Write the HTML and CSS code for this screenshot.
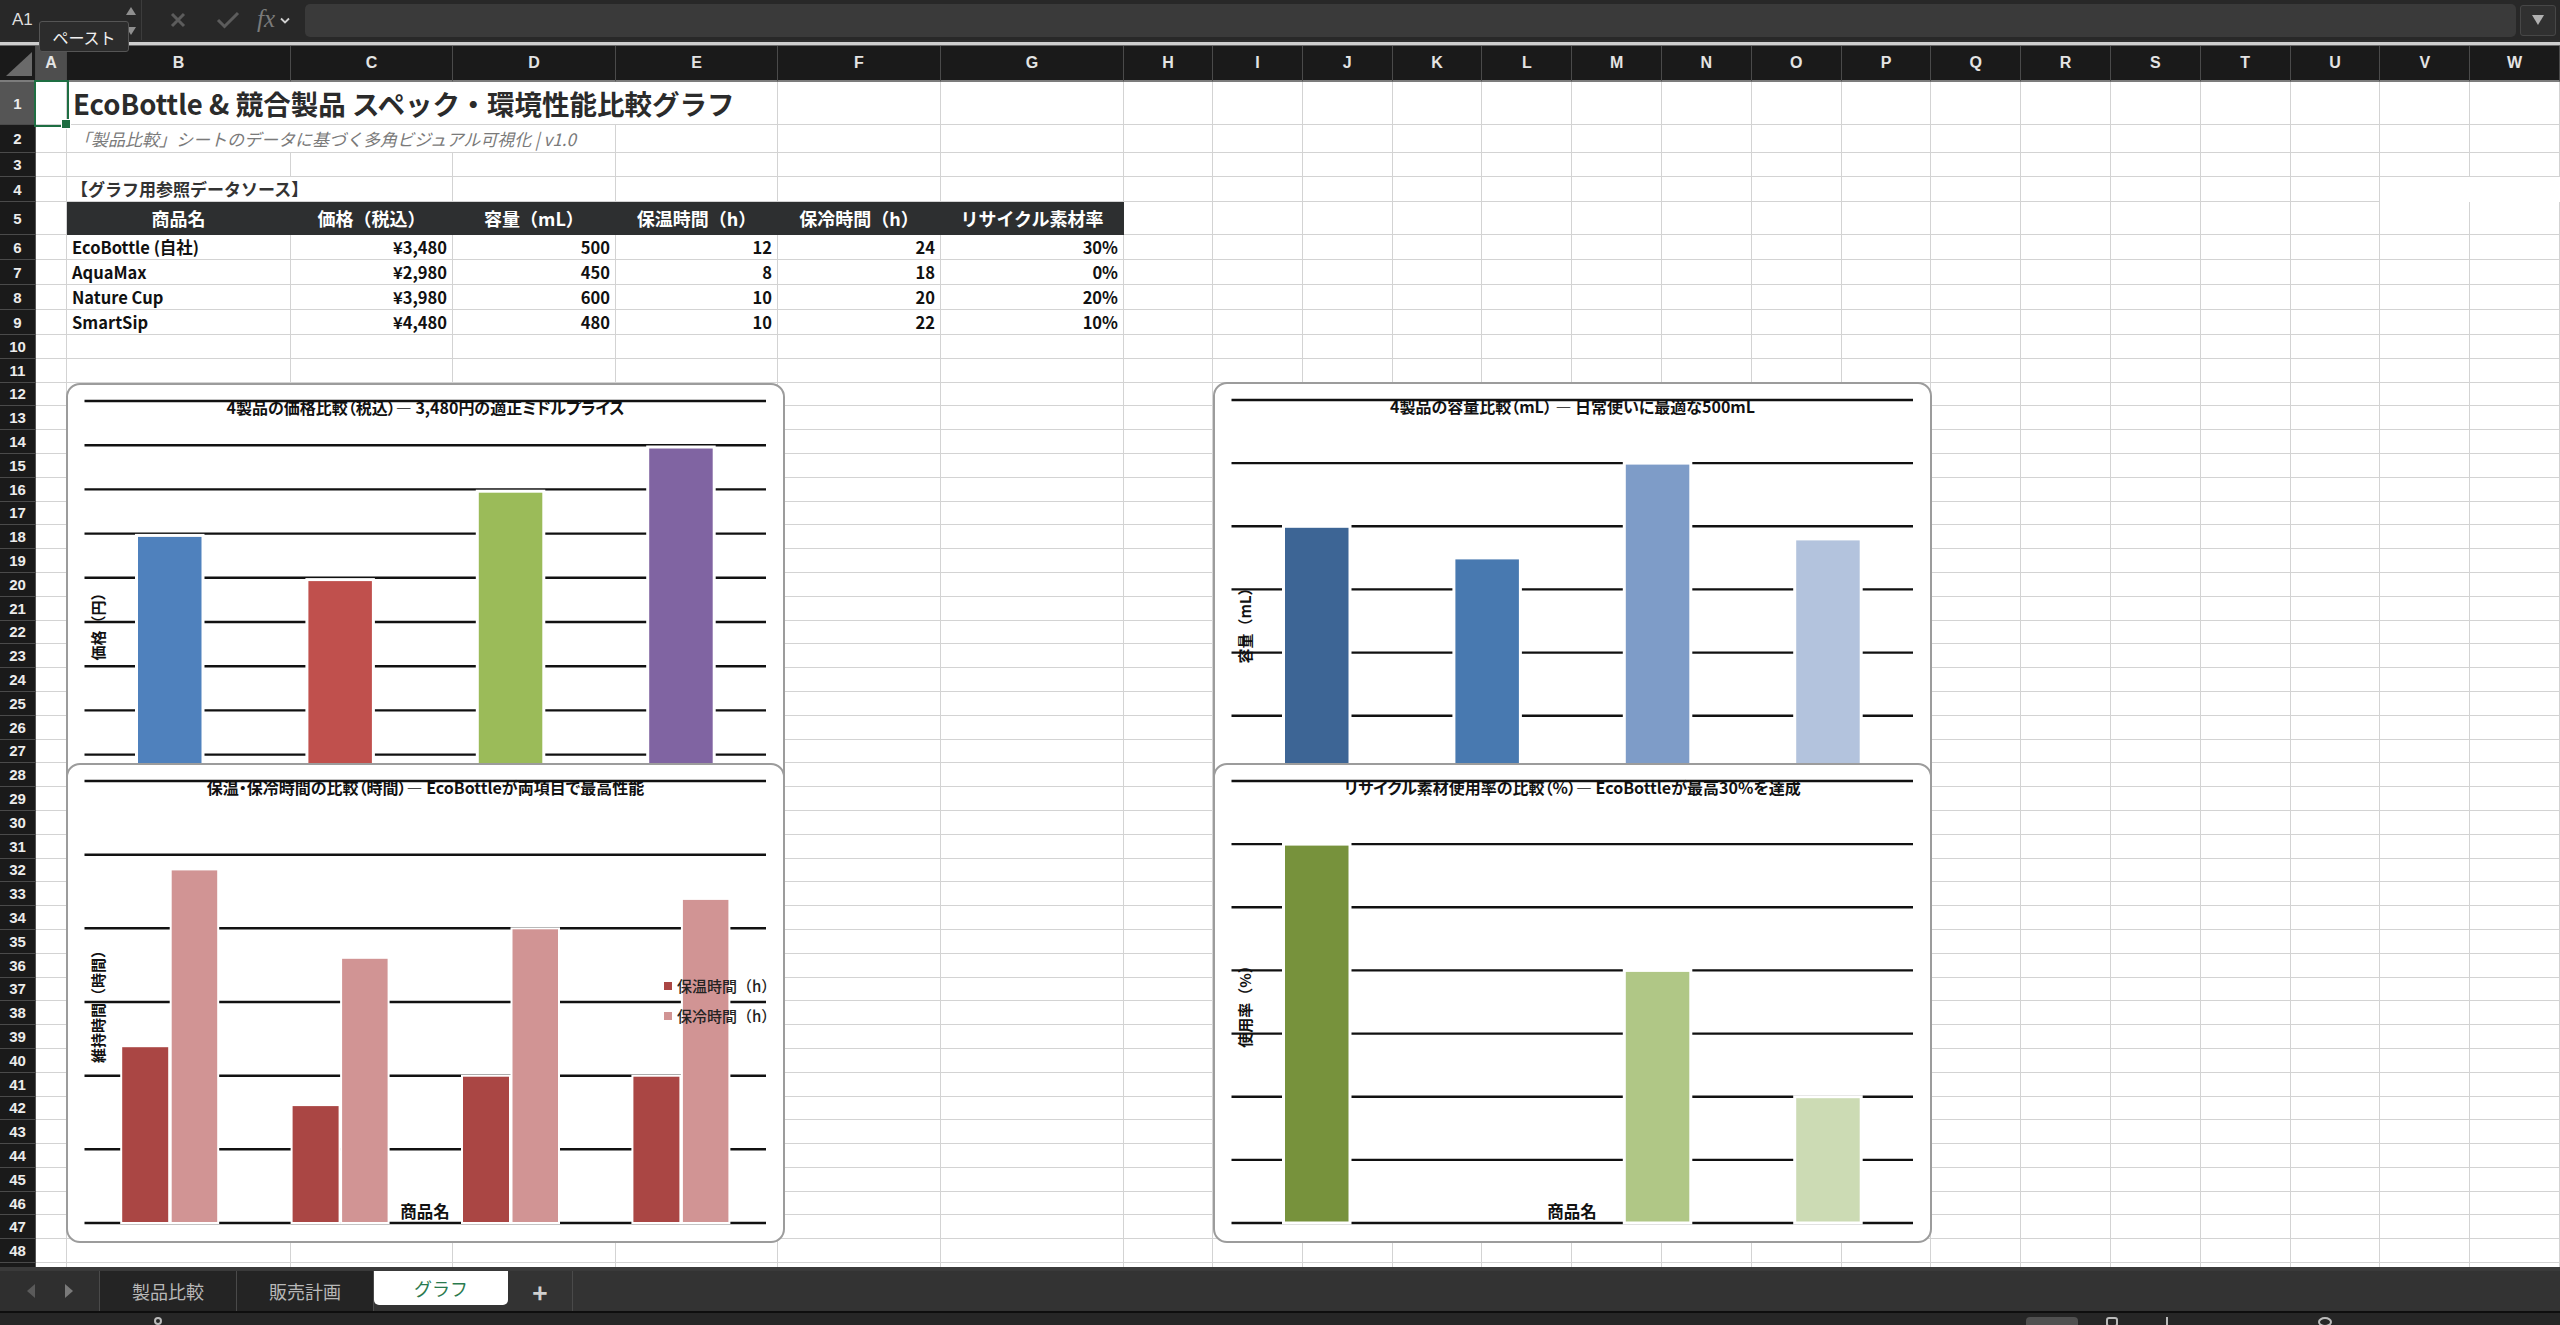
FILE: index.html
```html
<!DOCTYPE html>
<html lang="ja">
<head>
<meta charset="utf-8">
<title>グラフ</title>
<link rel="stylesheet" href="styles.css">
</head>
<body>
<div class="app">
  <div class="fbar">
    <div class="namebox">
      <span class="nb-text">A1</span>
      <span class="nb-spin">
        <svg width="12" height="30" viewBox="0 0 12 30"><path class="spin" d="M1 10 L6 2 L11 10 Z M1 22 L6 30 L11 22 Z"/></svg>
      </span>
    </div>
    <div class="ficons">
      <svg class="ic-x" width="16" height="16" viewBox="0 0 16 16"><path d="M2 2 L14 14 M14 2 L2 14"/></svg>
      <svg class="ic-ok" width="24" height="18" viewBox="0 0 24 18"><path d="M2 9 L8.5 15.5 L22 2"/></svg>
      <span class="fx">fx</span>
      <svg class="ic-chev" width="10" height="7" viewBox="0 0 10 7"><path d="M1 1.5 L5 5.5 L9 1.5"/></svg>
    </div>
    <div class="finput"></div>
    <div class="fdrop"><svg width="14" height="12" viewBox="0 0 14 12"><path d="M1 1 L13 1 L7 11 Z"/></svg></div>
  </div>
  <div class="fsep"></div>

  <div class="sheet">
    <table class="grid">
      <colgroup>
        <col class="w-rh"><col class="w-a"><col class="w-b"><col class="w-c"><col class="w-d"><col class="w-e"><col class="w-f"><col class="w-g"><col class="w-h">
        <col class="w-n"><col class="w-n"><col class="w-n"><col class="w-n"><col class="w-n"><col class="w-n"><col class="w-n"><col class="w-n"><col class="w-n"><col class="w-n"><col class="w-n"><col class="w-n"><col class="w-n"><col class="w-n"><col class="w-n">
      </colgroup>
      <thead>
        <tr class="hdr">
          <th class="corner"><span class="tri"></span></th><th class="hsel">A</th><th>B</th><th>C</th><th>D</th><th>E</th><th>F</th><th>G</th><th>H</th><th>I</th><th>J</th><th>K</th><th>L</th><th>M</th><th>N</th><th>O</th><th>P</th><th>Q</th><th>R</th><th>S</th><th>T</th><th>U</th><th>V</th><th>W</th>
        </tr>
      </thead>
      <tbody>
        <tr class="r-1"><th class="hsel">1</th><td class="sel"></td><td colspan="4" class="title">EcoBottle &amp; 競合製品 スペック・環境性能比較グラフ</td><td></td><td></td><td></td><td></td><td></td><td></td><td></td><td></td><td></td><td></td><td></td><td></td><td></td><td></td><td></td><td></td><td></td><td></td></tr>
        <tr class="r-2"><th>2</th><td></td><td colspan="3" class="sub">「製品比較」シートのデータに基づく多角ビジュアル可視化 | v1.0</td><td></td><td></td><td></td><td></td><td></td><td></td><td></td><td></td><td></td><td></td><td></td><td></td><td></td><td></td><td></td><td></td><td></td><td></td><td></td></tr>
        <tr class="r-3"><th>3</th><td></td><td></td><td></td><td></td><td></td><td></td><td></td><td></td><td></td><td></td><td></td><td></td><td></td><td></td><td></td><td></td><td></td><td></td><td></td><td></td><td></td><td></td><td></td></tr>
        <tr class="r-4"><th>4</th><td></td><td colspan="2" class="sect">【グラフ用参照データソース】</td><td></td><td></td><td></td><td></td><td></td><td></td><td></td><td></td><td></td><td></td><td></td><td></td><td></td><td></td><td></td><td></td><td></td><td></td></tr>
        <tr class="r-5"><th>5</th><td></td><td class="th">商品名</td><td class="th">価格（税込）</td><td class="th">容量（mL）</td><td class="th">保温時間（h）</td><td class="th">保冷時間（h）</td><td class="th">リサイクル素材率</td><td></td><td></td><td></td><td></td><td></td><td></td><td></td><td></td><td></td><td></td><td></td><td></td><td></td><td></td><td></td><td></td></tr>
        <tr class="r-d"><th>6</th><td></td><td class="name">EcoBottle (自社)</td><td class="num">¥3,480</td><td class="num">500</td><td class="num">12</td><td class="num">24</td><td class="num">30%</td><td></td><td></td><td></td><td></td><td></td><td></td><td></td><td></td><td></td><td></td><td></td><td></td><td></td><td></td><td></td><td></td></tr>
        <tr class="r-d"><th>7</th><td></td><td class="name">AquaMax</td><td class="num">¥2,980</td><td class="num">450</td><td class="num">8</td><td class="num">18</td><td class="num">0%</td><td></td><td></td><td></td><td></td><td></td><td></td><td></td><td></td><td></td><td></td><td></td><td></td><td></td><td></td><td></td><td></td></tr>
        <tr class="r-d"><th>8</th><td></td><td class="name">Nature Cup</td><td class="num">¥3,980</td><td class="num">600</td><td class="num">10</td><td class="num">20</td><td class="num">20%</td><td></td><td></td><td></td><td></td><td></td><td></td><td></td><td></td><td></td><td></td><td></td><td></td><td></td><td></td><td></td><td></td></tr>
        <tr class="r-d"><th>9</th><td></td><td class="name">SmartSip</td><td class="num">¥4,480</td><td class="num">480</td><td class="num">10</td><td class="num">22</td><td class="num">10%</td><td></td><td></td><td></td><td></td><td></td><td></td><td></td><td></td><td></td><td></td><td></td><td></td><td></td><td></td><td></td><td></td></tr>
        <tr class="r-n"><th>10</th><td></td><td></td><td></td><td></td><td></td><td></td><td></td><td></td><td></td><td></td><td></td><td></td><td></td><td></td><td></td><td></td><td></td><td></td><td></td><td></td><td></td><td></td><td></td></tr>
        <tr class="r-n"><th>11</th><td></td><td></td><td></td><td></td><td></td><td></td><td></td><td></td><td></td><td></td><td></td><td></td><td></td><td></td><td></td><td></td><td></td><td></td><td></td><td></td><td></td><td></td><td></td></tr>
        <tr class="r-n"><th>12</th><td></td><td></td><td></td><td></td><td></td><td></td><td></td><td></td><td></td><td></td><td></td><td></td><td></td><td></td><td></td><td></td><td></td><td></td><td></td><td></td><td></td><td></td><td></td></tr>
        <tr class="r-n"><th>13</th><td></td><td></td><td></td><td></td><td></td><td></td><td></td><td></td><td></td><td></td><td></td><td></td><td></td><td></td><td></td><td></td><td></td><td></td><td></td><td></td><td></td><td></td><td></td></tr>
        <tr class="r-n"><th>14</th><td></td><td></td><td></td><td></td><td></td><td></td><td></td><td></td><td></td><td></td><td></td><td></td><td></td><td></td><td></td><td></td><td></td><td></td><td></td><td></td><td></td><td></td><td></td></tr>
        <tr class="r-n"><th>15</th><td></td><td></td><td></td><td></td><td></td><td></td><td></td><td></td><td></td><td></td><td></td><td></td><td></td><td></td><td></td><td></td><td></td><td></td><td></td><td></td><td></td><td></td><td></td></tr>
        <tr class="r-n"><th>16</th><td></td><td></td><td></td><td></td><td></td><td></td><td></td><td></td><td></td><td></td><td></td><td></td><td></td><td></td><td></td><td></td><td></td><td></td><td></td><td></td><td></td><td></td><td></td></tr>
        <tr class="r-n"><th>17</th><td></td><td></td><td></td><td></td><td></td><td></td><td></td><td></td><td></td><td></td><td></td><td></td><td></td><td></td><td></td><td></td><td></td><td></td><td></td><td></td><td></td><td></td><td></td></tr>
        <tr class="r-n"><th>18</th><td></td><td></td><td></td><td></td><td></td><td></td><td></td><td></td><td></td><td></td><td></td><td></td><td></td><td></td><td></td><td></td><td></td><td></td><td></td><td></td><td></td><td></td><td></td></tr>
        <tr class="r-n"><th>19</th><td></td><td></td><td></td><td></td><td></td><td></td><td></td><td></td><td></td><td></td><td></td><td></td><td></td><td></td><td></td><td></td><td></td><td></td><td></td><td></td><td></td><td></td><td></td></tr>
        <tr class="r-n"><th>20</th><td></td><td></td><td></td><td></td><td></td><td></td><td></td><td></td><td></td><td></td><td></td><td></td><td></td><td></td><td></td><td></td><td></td><td></td><td></td><td></td><td></td><td></td><td></td></tr>
        <tr class="r-n"><th>21</th><td></td><td></td><td></td><td></td><td></td><td></td><td></td><td></td><td></td><td></td><td></td><td></td><td></td><td></td><td></td><td></td><td></td><td></td><td></td><td></td><td></td><td></td><td></td></tr>
        <tr class="r-n"><th>22</th><td></td><td></td><td></td><td></td><td></td><td></td><td></td><td></td><td></td><td></td><td></td><td></td><td></td><td></td><td></td><td></td><td></td><td></td><td></td><td></td><td></td><td></td><td></td></tr>
        <tr class="r-n"><th>23</th><td></td><td></td><td></td><td></td><td></td><td></td><td></td><td></td><td></td><td></td><td></td><td></td><td></td><td></td><td></td><td></td><td></td><td></td><td></td><td></td><td></td><td></td><td></td></tr>
        <tr class="r-n"><th>24</th><td></td><td></td><td></td><td></td><td></td><td></td><td></td><td></td><td></td><td></td><td></td><td></td><td></td><td></td><td></td><td></td><td></td><td></td><td></td><td></td><td></td><td></td><td></td></tr>
        <tr class="r-n"><th>25</th><td></td><td></td><td></td><td></td><td></td><td></td><td></td><td></td><td></td><td></td><td></td><td></td><td></td><td></td><td></td><td></td><td></td><td></td><td></td><td></td><td></td><td></td><td></td></tr>
        <tr class="r-n"><th>26</th><td></td><td></td><td></td><td></td><td></td><td></td><td></td><td></td><td></td><td></td><td></td><td></td><td></td><td></td><td></td><td></td><td></td><td></td><td></td><td></td><td></td><td></td><td></td></tr>
        <tr class="r-n"><th>27</th><td></td><td></td><td></td><td></td><td></td><td></td><td></td><td></td><td></td><td></td><td></td><td></td><td></td><td></td><td></td><td></td><td></td><td></td><td></td><td></td><td></td><td></td><td></td></tr>
        <tr class="r-n"><th>28</th><td></td><td></td><td></td><td></td><td></td><td></td><td></td><td></td><td></td><td></td><td></td><td></td><td></td><td></td><td></td><td></td><td></td><td></td><td></td><td></td><td></td><td></td><td></td></tr>
        <tr class="r-n"><th>29</th><td></td><td></td><td></td><td></td><td></td><td></td><td></td><td></td><td></td><td></td><td></td><td></td><td></td><td></td><td></td><td></td><td></td><td></td><td></td><td></td><td></td><td></td><td></td></tr>
        <tr class="r-n"><th>30</th><td></td><td></td><td></td><td></td><td></td><td></td><td></td><td></td><td></td><td></td><td></td><td></td><td></td><td></td><td></td><td></td><td></td><td></td><td></td><td></td><td></td><td></td><td></td></tr>
        <tr class="r-n"><th>31</th><td></td><td></td><td></td><td></td><td></td><td></td><td></td><td></td><td></td><td></td><td></td><td></td><td></td><td></td><td></td><td></td><td></td><td></td><td></td><td></td><td></td><td></td><td></td></tr>
        <tr class="r-n"><th>32</th><td></td><td></td><td></td><td></td><td></td><td></td><td></td><td></td><td></td><td></td><td></td><td></td><td></td><td></td><td></td><td></td><td></td><td></td><td></td><td></td><td></td><td></td><td></td></tr>
        <tr class="r-n"><th>33</th><td></td><td></td><td></td><td></td><td></td><td></td><td></td><td></td><td></td><td></td><td></td><td></td><td></td><td></td><td></td><td></td><td></td><td></td><td></td><td></td><td></td><td></td><td></td></tr>
        <tr class="r-n"><th>34</th><td></td><td></td><td></td><td></td><td></td><td></td><td></td><td></td><td></td><td></td><td></td><td></td><td></td><td></td><td></td><td></td><td></td><td></td><td></td><td></td><td></td><td></td><td></td></tr>
        <tr class="r-n"><th>35</th><td></td><td></td><td></td><td></td><td></td><td></td><td></td><td></td><td></td><td></td><td></td><td></td><td></td><td></td><td></td><td></td><td></td><td></td><td></td><td></td><td></td><td></td><td></td></tr>
        <tr class="r-n"><th>36</th><td></td><td></td><td></td><td></td><td></td><td></td><td></td><td></td><td></td><td></td><td></td><td></td><td></td><td></td><td></td><td></td><td></td><td></td><td></td><td></td><td></td><td></td><td></td></tr>
        <tr class="r-n"><th>37</th><td></td><td></td><td></td><td></td><td></td><td></td><td></td><td></td><td></td><td></td><td></td><td></td><td></td><td></td><td></td><td></td><td></td><td></td><td></td><td></td><td></td><td></td><td></td></tr>
        <tr class="r-n"><th>38</th><td></td><td></td><td></td><td></td><td></td><td></td><td></td><td></td><td></td><td></td><td></td><td></td><td></td><td></td><td></td><td></td><td></td><td></td><td></td><td></td><td></td><td></td><td></td></tr>
        <tr class="r-n"><th>39</th><td></td><td></td><td></td><td></td><td></td><td></td><td></td><td></td><td></td><td></td><td></td><td></td><td></td><td></td><td></td><td></td><td></td><td></td><td></td><td></td><td></td><td></td><td></td></tr>
        <tr class="r-n"><th>40</th><td></td><td></td><td></td><td></td><td></td><td></td><td></td><td></td><td></td><td></td><td></td><td></td><td></td><td></td><td></td><td></td><td></td><td></td><td></td><td></td><td></td><td></td><td></td></tr>
        <tr class="r-n"><th>41</th><td></td><td></td><td></td><td></td><td></td><td></td><td></td><td></td><td></td><td></td><td></td><td></td><td></td><td></td><td></td><td></td><td></td><td></td><td></td><td></td><td></td><td></td><td></td></tr>
        <tr class="r-n"><th>42</th><td></td><td></td><td></td><td></td><td></td><td></td><td></td><td></td><td></td><td></td><td></td><td></td><td></td><td></td><td></td><td></td><td></td><td></td><td></td><td></td><td></td><td></td><td></td></tr>
        <tr class="r-n"><th>43</th><td></td><td></td><td></td><td></td><td></td><td></td><td></td><td></td><td></td><td></td><td></td><td></td><td></td><td></td><td></td><td></td><td></td><td></td><td></td><td></td><td></td><td></td><td></td></tr>
        <tr class="r-n"><th>44</th><td></td><td></td><td></td><td></td><td></td><td></td><td></td><td></td><td></td><td></td><td></td><td></td><td></td><td></td><td></td><td></td><td></td><td></td><td></td><td></td><td></td><td></td><td></td></tr>
        <tr class="r-n"><th>45</th><td></td><td></td><td></td><td></td><td></td><td></td><td></td><td></td><td></td><td></td><td></td><td></td><td></td><td></td><td></td><td></td><td></td><td></td><td></td><td></td><td></td><td></td><td></td></tr>
        <tr class="r-n"><th>46</th><td></td><td></td><td></td><td></td><td></td><td></td><td></td><td></td><td></td><td></td><td></td><td></td><td></td><td></td><td></td><td></td><td></td><td></td><td></td><td></td><td></td><td></td><td></td></tr>
        <tr class="r-n"><th>47</th><td></td><td></td><td></td><td></td><td></td><td></td><td></td><td></td><td></td><td></td><td></td><td></td><td></td><td></td><td></td><td></td><td></td><td></td><td></td><td></td><td></td><td></td><td></td></tr>
        <tr class="r-n"><th>48</th><td></td><td></td><td></td><td></td><td></td><td></td><td></td><td></td><td></td><td></td><td></td><td></td><td></td><td></td><td></td><td></td><td></td><td></td><td></td><td></td><td></td><td></td><td></td></tr>
        <tr class="r-n"><th></th><td></td><td></td><td></td><td></td><td></td><td></td><td></td><td></td><td></td><td></td><td></td><td></td><td></td><td></td><td></td><td></td><td></td><td></td><td></td><td></td><td></td><td></td><td></td></tr>
      </tbody>
    </table>

    <!-- Chart 1: price -->
    <div class="chart ch-tl">
      <svg class="plot" width="715" height="476" viewBox="0 0 715 476">
        <g class="gl">
          <line x1="16.5" x2="698" y1="16" y2="16"/><line x1="16.5" x2="698" y1="60.2" y2="60.2"/><line x1="16.5" x2="698" y1="104.4" y2="104.4"/><line x1="16.5" x2="698" y1="148.6" y2="148.6"/><line x1="16.5" x2="698" y1="192.8" y2="192.8"/><line x1="16.5" x2="698" y1="237" y2="237"/><line x1="16.5" x2="698" y1="281.2" y2="281.2"/><line x1="16.5" x2="698" y1="325.4" y2="325.4"/><line x1="16.5" x2="698" y1="369.6" y2="369.6"/><line x1="16.5" x2="698" y1="413.8" y2="413.8"/><line x1="16.5" x2="698" y1="458" y2="458"/>
        </g>
        <g class="bars">
          <rect x="68.5" y="150.4" width="66.5" height="310" fill="#4f81bd"/>
          <rect x="238.9" y="194.6" width="66.5" height="270" fill="#c0504d"/>
          <rect x="409.3" y="106.2" width="66.5" height="360" fill="#9bbb59"/>
          <rect x="579.7" y="62" width="66.5" height="400" fill="#8064a2"/>
        </g>
      </svg>
      <div class="ctitle">4製品の価格比較（税込）— 3,480円の適正ミドルプライス</div>
      <div class="ylabel">価格（円）</div>
    </div>

    <!-- Chart 2: capacity -->
    <div class="chart ch-tr">
      <svg class="plot" width="715" height="476" viewBox="0 0 715 476">
        <g class="gl">
          <line x1="16.5" x2="698" y1="16" y2="16"/><line x1="16.5" x2="698" y1="79.1" y2="79.1"/><line x1="16.5" x2="698" y1="142.3" y2="142.3"/><line x1="16.5" x2="698" y1="205.4" y2="205.4"/><line x1="16.5" x2="698" y1="268.6" y2="268.6"/><line x1="16.5" x2="698" y1="331.7" y2="331.7"/><line x1="16.5" x2="698" y1="394.9" y2="394.9"/><line x1="16.5" x2="698" y1="458" y2="458"/>
        </g>
        <g class="bars">
          <rect x="68.5" y="142.3" width="66.5" height="320" fill="#3d6595"/>
          <rect x="238.9" y="173.9" width="66.5" height="290" fill="#4879b0"/>
          <rect x="409.3" y="79.1" width="66.5" height="385" fill="#7e9cc8"/>
          <rect x="579.7" y="154.9" width="66.5" height="310" fill="#b3c3dd"/>
        </g>
      </svg>
      <div class="ctitle">4製品の容量比較（mL） — 日常使いに最適な500mL</div>
      <div class="ylabel">容量（mL）</div>
    </div>

    <!-- Chart 3: keep warm / cold -->
    <div class="chart ch-bl">
      <svg class="plot" width="715" height="476" viewBox="0 0 715 476">
        <g class="gl">
          <line x1="16.5" x2="698" y1="16" y2="16"/><line x1="16.5" x2="698" y1="89.7" y2="89.7"/><line x1="16.5" x2="698" y1="163.3" y2="163.3"/><line x1="16.5" x2="698" y1="237" y2="237"/><line x1="16.5" x2="698" y1="310.7" y2="310.7"/><line x1="16.5" x2="698" y1="384.3" y2="384.3"/><line x1="16.5" x2="698" y1="458" y2="458"/>
        </g>
        <g class="bars thin">
          <rect x="53.2" y="281.2" width="48" height="176.8" fill="#aa4644"/>
          <rect x="102.7" y="104.4" width="47.5" height="353.6" fill="#d19494"/>
          <rect x="223.6" y="340.1" width="48" height="117.9" fill="#aa4644"/>
          <rect x="273.1" y="192.8" width="47.5" height="265.2" fill="#d19494"/>
          <rect x="394" y="310.7" width="48" height="147.3" fill="#aa4644"/>
          <rect x="443.5" y="163.3" width="47.5" height="294.7" fill="#d19494"/>
          <rect x="564.4" y="310.7" width="48" height="147.3" fill="#aa4644"/>
          <rect x="613.9" y="133.9" width="47.5" height="324.1" fill="#d19494"/>
        </g>
      </svg>
      <div class="ctitle">保温・保冷時間の比較（時間）— EcoBottleが両項目で最高性能</div>
      <div class="ylabel">維持時間（時間）</div>
      <div class="xlabel">商品名</div>
      <div class="legend">
        <div class="lg-item"><span class="sw sw-hot"></span>保温時間（h）</div>
        <div class="lg-item"><span class="sw sw-cold"></span>保冷時間（h）</div>
      </div>
    </div>

    <!-- Chart 4: recycled material -->
    <div class="chart ch-br">
      <svg class="plot" width="715" height="476" viewBox="0 0 715 476">
        <g class="gl">
          <line x1="16.5" x2="698" y1="16" y2="16"/><line x1="16.5" x2="698" y1="79.1" y2="79.1"/><line x1="16.5" x2="698" y1="142.3" y2="142.3"/><line x1="16.5" x2="698" y1="205.4" y2="205.4"/><line x1="16.5" x2="698" y1="268.6" y2="268.6"/><line x1="16.5" x2="698" y1="331.7" y2="331.7"/><line x1="16.5" x2="698" y1="394.9" y2="394.9"/><line x1="16.5" x2="698" y1="458" y2="458"/>
        </g>
        <g class="bars">
          <rect x="68.5" y="79.1" width="66.5" height="378.9" fill="#77923c"/>
          <rect x="409.3" y="205.4" width="66.5" height="252.6" fill="#b0c786"/>
          <rect x="579.7" y="331.7" width="66.5" height="126.3" fill="#ccdbb4"/>
        </g>
      </svg>
      <div class="ctitle">リサイクル素材使用率の比較（%）— EcoBottleが最高30%を達成</div>
      <div class="ylabel">使用率（%）</div>
      <div class="xlabel">商品名</div>
    </div>
  </div>

  <div class="tabbar">
    <div class="tabnav">
      <svg width="10" height="14" viewBox="0 0 10 14"><path class="nav-l" d="M9 0 L1 7 L9 14 Z"/></svg>
      <svg width="10" height="14" viewBox="0 0 10 14"><path class="nav-r" d="M1 0 L9 7 L1 14 Z"/></svg>
    </div>
    <div class="tab">製品比較</div>
    <div class="tab">販売計画</div>
    <div class="tab active">グラフ</div>
    <div class="tab add">+</div>
  </div>
  <div class="statusbar">
    <span class="sb-dot"></span>
    <span class="sb-btn"></span>
    <span class="sb-ic"></span>
    <span class="sb-ic2"></span>
    <span class="sb-ic3"></span>
  </div>

  <div class="tooltip">ペースト</div>
</div>
</body>
</html>
```

FILE: styles.css
```css
* { box-sizing: border-box; }
html, body { margin: 0; padding: 0; }
body {
  background: #1f1f1f;
  font-family: "Noto Sans CJK JP", "Noto Sans", "Liberation Sans", sans-serif;
}
.app {
  width: 2560px;
  height: 1325px;
  display: flex;
  flex-direction: column;
  position: relative;
  overflow: hidden;
}

/* ---------- formula bar ---------- */
.fbar {
  height: 40px;
  flex: none;
  background: #282828;
  display: flex;
  align-items: center;
}
.namebox {
  width: 142px;
  height: 40px;
  display: flex;
  align-items: center;
  justify-content: space-between;
  padding: 0 4px 0 12px;
  border-right: 1px solid #3c3c3c;
}
.nb-text { color: #dedede; font-size: 17px; font-family: "Liberation Sans", "Noto Sans", sans-serif; }
.nb-spin { display: flex; align-items: center; }
.spin { fill: #8f8f8f; }
.ficons {
  display: flex;
  align-items: center;
  padding-left: 28px;
  width: 163px;
  height: 40px;
}
.ic-x path { stroke: #5c5c5c; stroke-width: 3; fill: none; }
.ic-ok { margin-left: 30px; }
.ic-ok path { stroke: #5c5c5c; stroke-width: 3; fill: none; }
.fx {
  margin-left: 17px;
  font-family: "Liberation Serif", "DejaVu Serif", serif;
  font-style: italic;
  font-size: 25px;
  color: #7a7a7a;
  line-height: 1;
  margin-top: -4px;
}
.ic-chev { margin-left: 5px; }
.ic-chev path { stroke: #d0d0d0; stroke-width: 1.8; fill: none; }
.finput {
  flex: 1;
  height: 33px;
  background: #3a3a3a;
  border-radius: 5px;
}
.fdrop {
  width: 36px;
  height: 31px;
  margin: 0 4px 0 4px;
  background: #303030;
  border: 1px solid #474747;
  border-radius: 3px;
  display: flex;
  align-items: center;
  justify-content: center;
}
.fdrop path { fill: #b0b0b0; }
.fsep {
  height: 6px;
  flex: none;
  background: #cfcfcf;
  border-top: 2px solid #2e2e2e;
  border-bottom: 1px solid #6a6a6a;
}

/* ---------- sheet ---------- */
.sheet {
  position: relative;
  height: 1221px;
  flex: none;
  overflow: hidden;
  background: #fff;
}
.grid {
  width: 2560px;
  table-layout: fixed;
  border-collapse: separate;
  border-spacing: 0;
}
.w-rh { width: 36px; }
.w-a { width: 31px; }
.w-b { width: 224px; }
.w-c { width: 162px; }
.w-d { width: 163px; }
.w-e { width: 162px; }
.w-f { width: 163px; }
.w-g { width: 183px; }
.w-h { width: 89px; }
.w-n { width: 89.8px; }

.hdr { height: 36px; }
.hdr th {
  background: #1a1a1a;
  color: #e4e4e4;
  font-family: "Liberation Sans", "Noto Sans", sans-serif;
  font-weight: bold;
  font-size: 16px;
  border-right: 1px solid #4a4a4a;
  border-bottom: 2px solid #7c7c7c;
  padding: 0;
}
.hdr th.hsel { background: #4e4e4e; }
.hdr th.corner { position: relative; background: #1a1a1a; }
.tri {
  position: absolute;
  right: 3px;
  bottom: 4px;
  width: 0;
  height: 0;
  border-left: 26px solid transparent;
  border-bottom: 24px solid #6a6a6a;
}
tbody th {
  background: #1a1a1a;
  color: #ececec;
  font-family: "Liberation Sans", "Noto Sans", sans-serif;
  font-weight: bold;
  font-size: 15px;
  padding: 0;
  border-right: 1px solid #555;
  border-bottom: 1px solid #4a4a4a;
}
tbody th.hsel { background: #555; }
td {
  padding: 0;
  border-right: 1px solid #d3d3d3;
  border-bottom: 1px solid #d3d3d3;
  white-space: nowrap;
  line-height: 20px;
  color: #111;
}
.r-1 { height: 43px; }
.r-2 { height: 28px; }
.r-3 { height: 24px; }
.r-4 { height: 25px; }
.r-5 { height: 33px; }
.r-d { height: 25px; }
.r-n { height: 23.8px; }

td.sel {
  position: relative;
  outline: 2px solid #1e6e42;
  outline-offset: 0px;
}
td.sel::after {
  content: "";
  position: absolute;
  right: -5px;
  bottom: -5px;
  width: 8px;
  height: 8px;
  background: #1e6e42;
  border: 1px solid #fff;
}
.title {
  font-size: 27.5px;
  font-weight: bold;
  color: #2b2b2b;
  padding-left: 6px;
  line-height: 34px;
}
.sub {
  font-size: 17px;
  font-style: italic;
  color: #7a7a7a;
  padding-left: 7px;
}
.sect {
  font-size: 17px;
  font-weight: bold;
  color: #333;
  padding-left: 4px;
}
td.th {
  background: #2d2f30;
  color: #fff;
  font-weight: bold;
  font-size: 18px;
  text-align: center;
  border-right-color: #2d2f30;
  border-bottom-color: #2d2f30;
}
td.name {
  font-size: 16.5px;
  font-weight: bold;
  padding-left: 5px;
}
td.num {
  font-size: 16.5px;
  font-weight: bold;
  text-align: right;
  padding-right: 5px;
}

/* ---------- charts (floating objects) ---------- */
.chart {
  position: absolute;
  width: 719px;
  height: 480px;
  background: #fff;
  border: 2px solid #9c9c9c;
  border-radius: 14px;
  overflow: hidden;
}
.ch-tl { left: 66px; top: 337px; }
.ch-tr { left: 1213px; top: 336px; }
.ch-bl { left: 66px; top: 717px; }
.ch-br { left: 1213px; top: 717px; }
.plot { display: block; }
.gl line { stroke: #111; stroke-width: 2.4; }
.bars rect { stroke: #fff; stroke-width: 3; }
.bars.thin rect { stroke-width: 2; }
.ctitle {
  position: absolute;
  left: 0;
  right: 0;
  top: 12px;
  text-align: center;
  font-size: 16px;
  font-weight: bold;
  line-height: 20px;
  color: #111;
  font-feature-settings: "palt";
  white-space: nowrap;
}
.ylabel {
  position: absolute;
  left: 30px;
  top: 238px;
  transform: translate(-50%, -50%) rotate(-90deg);
  font-size: 15px;
  font-weight: bold;
  color: #111;
  white-space: nowrap;
  line-height: 18px;
}
.xlabel {
  position: absolute;
  left: 357px;
  top: 446px;
  transform: translate(-50%, -50%);
  font-size: 16.5px;
  font-weight: bold;
  color: #111;
  line-height: 20px;
}
.legend {
  position: absolute;
  left: 596px;
  top: 211px;
  display: flex;
  flex-direction: column;
  gap: 10px;
}
.lg-item {
  display: flex;
  align-items: center;
  gap: 5px;
  font-size: 15px;
  font-weight: 500;
  line-height: 20px;
  color: #222;
  white-space: nowrap;
}
.sw { width: 8px; height: 8px; display: block; }
.sw-hot { background: #aa4644; }
.sw-cold { background: #d19494; }

/* ---------- tabs ---------- */
.tabbar {
  height: 44px;
  flex: none;
  background: #333;
  display: flex;
  align-items: stretch;
  border-top: 4px solid #3a3a3a;
}
.tabnav {
  width: 100px;
  display: flex;
  align-items: center;
  justify-content: center;
  gap: 28px;
  border-right: 1px solid #4a4a4a;
  background: #2f2f2f;
}
.nav-l { fill: #5a5a5a; }
.nav-r { fill: #7a7a7a; }
.tab {
  width: 137px;
  display: flex;
  align-items: center;
  justify-content: center;
  font-size: 18px;
  color: #b8b8b8;
  background: #242424;
  border-right: 1px solid #4a4a4a;
}
.tab.active {
  width: 134px;
  background: #fff;
  color: #2a7a4e;
  border-right: none;
  border-radius: 0 0 5px 5px;
  margin-bottom: 6px;
}
.tab.add {
  width: 65px;
  background: #333;
  color: #d0d0d0;
  font-size: 26px;
  font-weight: bold;
}
.statusbar {
  height: 14px;
  flex: none;
  background: #262626;
  border-top: 2px solid #0e0e0e;
  position: relative;
}
.sb-dot, .sb-btn, .sb-ic, .sb-ic2, .sb-ic3 { position: absolute; top: 4px; display: block; }
.sb-dot { left: 154px; width: 8px; height: 8px; border: 2px solid #bbb; border-radius: 50%; }
.sb-btn { left: 2026px; width: 52px; height: 14px; background: #505050; border-radius: 4px; }
.sb-ic { left: 2106px; width: 12px; height: 10px; border: 2px solid #bbb; border-radius: 3px; }
.sb-ic2 { left: 2166px; width: 2px; height: 10px; background: #bbb; }
.sb-ic3 { left: 2318px; width: 14px; height: 10px; border: 2px solid #bbb; border-radius: 50%; }

/* ---------- tooltip ---------- */
.tooltip {
  position: absolute;
  left: 39px;
  top: 21px;
  width: 90px;
  height: 31px;
  background: #2c2c2c;
  border: 1px solid #555;
  border-radius: 3px;
  color: #f0f0f0;
  font-size: 16px;
  display: flex;
  align-items: center;
  justify-content: center;
  z-index: 5;
}
```
